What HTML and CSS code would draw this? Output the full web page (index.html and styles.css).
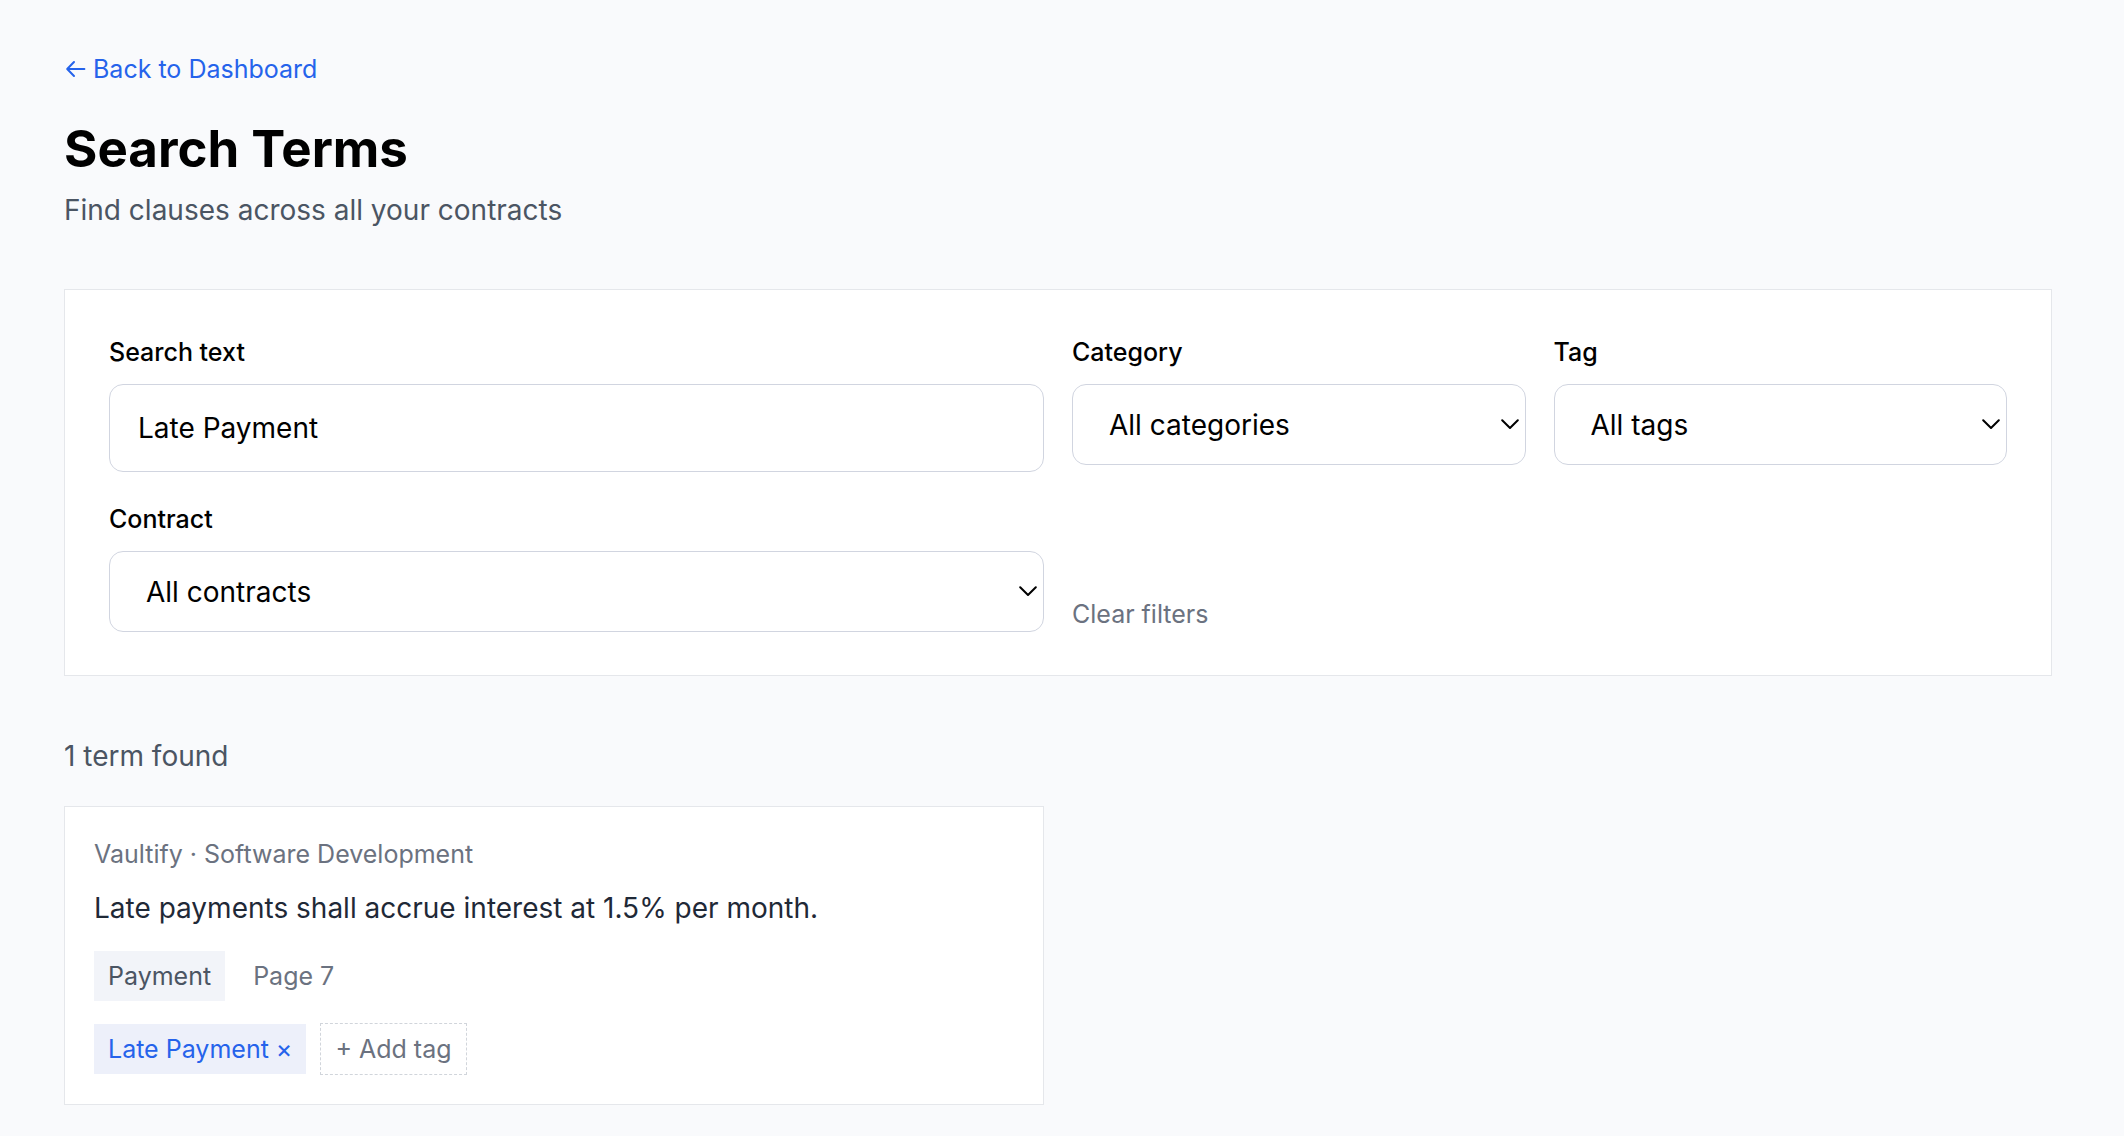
FILE: index.html
```html
<!doctype html>
<html lang="en">
<head>
  <meta charset="utf-8">
  <title>Search Terms</title>
  <meta name="viewport" content="width=device-width, initial-scale=1">
  <link rel="stylesheet" href="styles.css">
</head>
<body>
  <main class="page">
    <a href="#" class="back-link">
      <svg class="back-arrow" viewBox="0 0 22 18" aria-hidden="true"><path d="M20.4 9H3.5M10 2L3.2 9L10 16"/></svg>
      Back to Dashboard
    </a>
    <h1 class="page-title">Search Terms</h1>
    <p class="page-subtitle">Find clauses across all your contracts</p>

    <form class="filters">
      <div class="field field-wide">
        <label for="searchText">Search text</label>
        <input type="text" id="searchText" value="Late Payment">
      </div>
      <div class="field">
        <label for="category">Category</label>
        <div class="select-wrap">
          <select id="category">
            <option>All categories</option>
          </select>
          <svg class="chevron" viewBox="0 0 18 11" aria-hidden="true"><path d="M1.2 1.2L9 9L16.8 1.2"/></svg>
        </div>
      </div>
      <div class="field">
        <label for="tag">Tag</label>
        <div class="select-wrap">
          <select id="tag">
            <option>All tags</option>
          </select>
          <svg class="chevron" viewBox="0 0 18 11" aria-hidden="true"><path d="M1.2 1.2L9 9L16.8 1.2"/></svg>
        </div>
      </div>
      <div class="field field-wide">
        <label for="contract">Contract</label>
        <div class="select-wrap">
          <select id="contract">
            <option>All contracts</option>
          </select>
          <svg class="chevron" viewBox="0 0 18 11" aria-hidden="true"><path d="M1.2 1.2L9 9L16.8 1.2"/></svg>
        </div>
      </div>
      <button type="reset" class="clear-btn">Clear filters</button>
    </form>

    <p class="result-count">1 term found</p>

    <div class="results">
      <article class="term-card">
        <p class="term-source">Vaultify · Software Development</p>
        <p class="term-text">Late payments shall accrue interest at 1.5% per month.</p>
        <div class="term-meta">
          <span class="chip">Payment</span>
          <span class="term-page">Page 7</span>
        </div>
        <div class="term-tags">
          <span class="chip chip-tag">Late Payment <button type="button" class="chip-remove" aria-label="Remove tag">×</button></span>
          <button type="button" class="add-tag">+ Add tag</button>
        </div>
      </article>
    </div>
  </main>
</body>
</html>
```

FILE: styles.css
```css
* {
  box-sizing: border-box;
}
body {
  margin: 0;
  background: #f9fafc;
  color: #000;
  font-family: Inter, "Liberation Sans", sans-serif;
  font-size: 28px;
  line-height: 44px;
}
h1, p {
  margin: 0;
}
input, select, button {
  font-family: inherit;
  color: inherit;
}
.page {
  padding: 51px 72px 31px 64px;
}
.back-link {
  display: flex;
  width: fit-content;
  align-items: center;
  gap: 7px;
  color: #2563eb;
  font-size: 25px;
  line-height: 36px;
  text-decoration: none;
}
.back-arrow {
  width: 22px;
  height: 18px;
  fill: none;
  stroke: currentColor;
  stroke-width: 2;
  stroke-linecap: round;
  stroke-linejoin: round;
}
.page-title {
  margin-top: 30px;
  font-size: 51px;
  line-height: 64px;
  font-weight: 700;
}
.page-subtitle {
  margin-top: 7px;
  color: #4b5563;
}

/* Filters */
.filters {
  display: grid;
  grid-template-columns: repeat(4, 1fr);
  gap: 29px 28px;
  align-items: start;
  margin-top: 57px;
  padding: 44px 44px 43px;
  background: #fff;
  border: 1px solid #e5e7eb;
}
.field-wide {
  grid-column: span 2;
}
.field label {
  display: block;
  margin-bottom: 14px;
  font-size: 25px;
  line-height: 36px;
  font-weight: 500;
}
.field input,
.field select {
  display: block;
  width: 100%;
  border: 1px solid #d1d5e0;
  border-radius: 14px;
  background: #fff;
  font-size: 28px;
  line-height: 44px;
}
.field input {
  height: 88px;
  padding: 0 28px;
}
.field select {
  height: 81px;
  padding: 0 36px;
  appearance: none;
}
.select-wrap {
  position: relative;
}
.chevron {
  position: absolute;
  right: 7px;
  top: 35px;
  width: 18px;
  height: 11px;
  fill: none;
  stroke: #000;
  stroke-width: 2;
  stroke-linecap: round;
  stroke-linejoin: round;
  pointer-events: none;
}
.clear-btn {
  align-self: end;
  justify-self: start;
  padding: 0;
  border: none;
  background: none;
  color: #6b7280;
  font-size: 25px;
  line-height: 36px;
  cursor: pointer;
}

/* Results */
.result-count {
  margin-top: 58px;
  color: #4b5563;
}
.results {
  display: grid;
  grid-template-columns: repeat(2, 1fr);
  gap: 28px;
  margin-top: 28px;
}
.term-card {
  padding: 29px;
  background: #fff;
  border: 1px solid #e5e7eb;
}
.term-source {
  color: #6b7280;
  font-size: 25px;
  line-height: 36px;
}
.term-text {
  margin-top: 14px;
  color: #1f2937;
}
.term-meta,
.term-tags {
  display: flex;
  align-items: center;
  font-size: 25px;
  line-height: 36px;
}
.term-meta {
  gap: 28px;
  margin-top: 21px;
}
.term-tags {
  gap: 14px;
  margin-top: 22px;
}
.chip {
  padding: 7px 14px;
  background: #f2f4f9;
  color: #4b5563;
}
.chip-tag {
  background: #edf0fa;
  color: #2563eb;
}
.chip-remove {
  padding: 0;
  border: none;
  background: none;
  font-size: 25px;
  line-height: 36px;
  cursor: pointer;
}
.term-page {
  color: #6b7280;
}
.add-tag {
  padding: 7px 14px;
  border: 1px dashed #d1d5db;
  background: none;
  color: #6b7280;
  font-size: 25px;
  line-height: 36px;
  cursor: pointer;
}
```
